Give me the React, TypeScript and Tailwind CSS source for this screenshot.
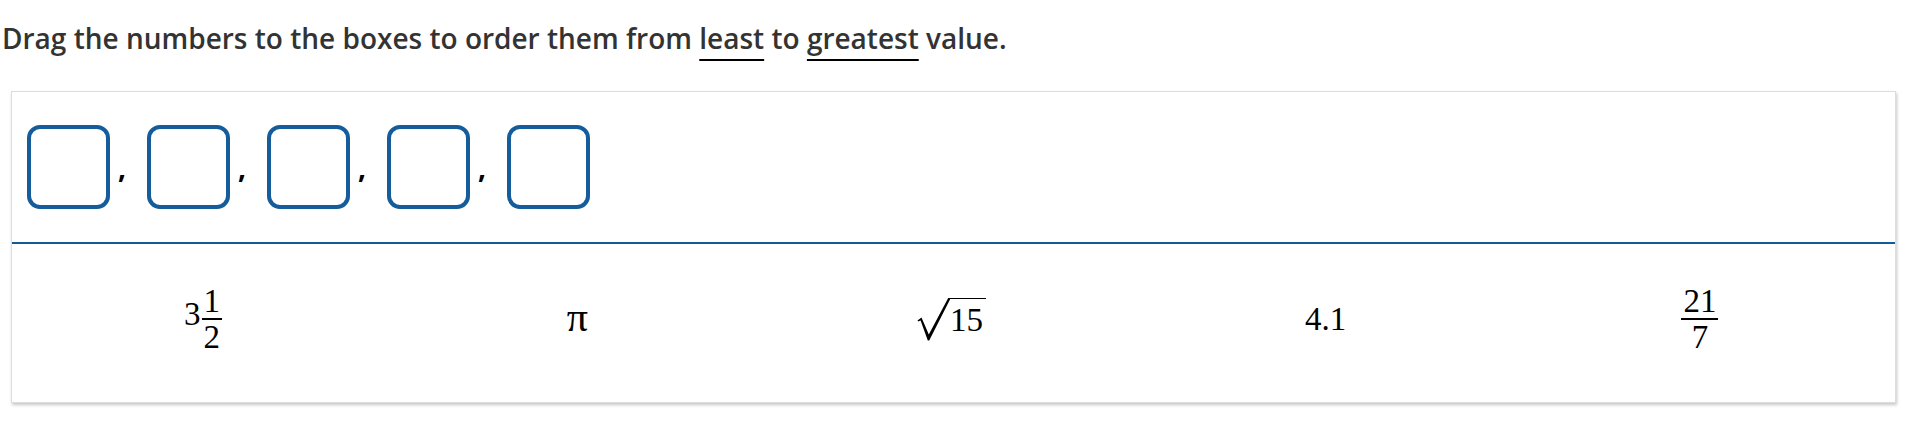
const boxes = [0, 1, 2, 3, 4]

const Fraction = ({ top, bottom }: { top: string; bottom: string }) => (
    <span className="inline-flex flex-col items-center">
        <span className="leading-[24px] px-[2px]">{top}</span>
        <span className="my-[5.5px] h-[1.5px] w-full bg-black" />
        <span className="leading-[24px] px-[2px]">{bottom}</span>
    </span>
)

const Radical = ({ children }: { children: string }) => (
    <span className="inline-flex items-start">
        <svg width="33" height="43" viewBox="0 0 33 43" className="block">
            <path d="M0.5 22.5 L4.5 19.5 L11.8 36.5 L31.2 0 L33 0 L33 1.5 L12.2 42.5 L10.8 42.5 L3.6 22.4 L1.2 23.6 Z" fill="black" />
        </svg>
        <span className="border-t-[1.5px] border-black pt-[5px] leading-[33px] pr-[3px]">{children}</span>
    </span>
)

const App = () => {
    const items = [
        <span key="a" className="inline-flex items-center">
            <span className="leading-[33px] mb-[10px] pr-[1px]">3</span>
            <Fraction top="1" bottom="2" />
        </span>,
        <span key="b" className="text-[42px] leading-[33px] mb-[3px]">π</span>,
        <Radical key="c">15</Radical>,
        <span key="d" className="leading-[33px]">4.1</span>,
        <Fraction key="e" top="21" bottom="7" />,
    ]

    return (
        <div className="w-[1922px] h-[430px] bg-white font-[Open_Sans,sans-serif]">
            {/* Prompt */}
            <p className="pt-[19px] pl-[2px] text-[28px] leading-[38px] font-semibold text-[#333]">
                Drag the numbers to the boxes to order them from{' '}
                <span className="underline decoration-black decoration-2 underline-offset-[10px]">least</span> to{' '}
                <span className="underline decoration-black decoration-2 underline-offset-[10px]">greatest</span> value.
            </p>

            {/* Drag area */}
            <div className="mt-[34px] ml-[11px] w-[1885px] border border-[#dcdcdc] bg-white shadow-[1px_2px_3px_rgba(0,0,0,0.22)]">
                <div className="flex items-center px-[15px] py-[33px]">
                    {boxes.map((b) => (
                        <div key={b} className="flex items-center">
                            <div className="w-[83px] h-[84px] rounded-[13px] border-[4px] border-[#155d9a]" />
                            {b < boxes.length - 1 && (
                                <span className="w-[37px] pl-[8px] text-[28px] leading-[28px] font-bold text-black">,</span>
                            )}
                        </div>
                    ))}
                </div>
                <div className="h-[2px] bg-[#125b97]" />
                <div className="grid grid-cols-5 h-[158px] pl-[4px] pr-[8px] pb-[8px] font-[Liberation_Serif,Times_New_Roman,serif] text-[33px] text-black">
                    {items.map((item, i) => (
                        <div key={i} className="flex items-center justify-center">
                            {item}
                        </div>
                    ))}
                </div>
            </div>
        </div>
    )
}

export default App
